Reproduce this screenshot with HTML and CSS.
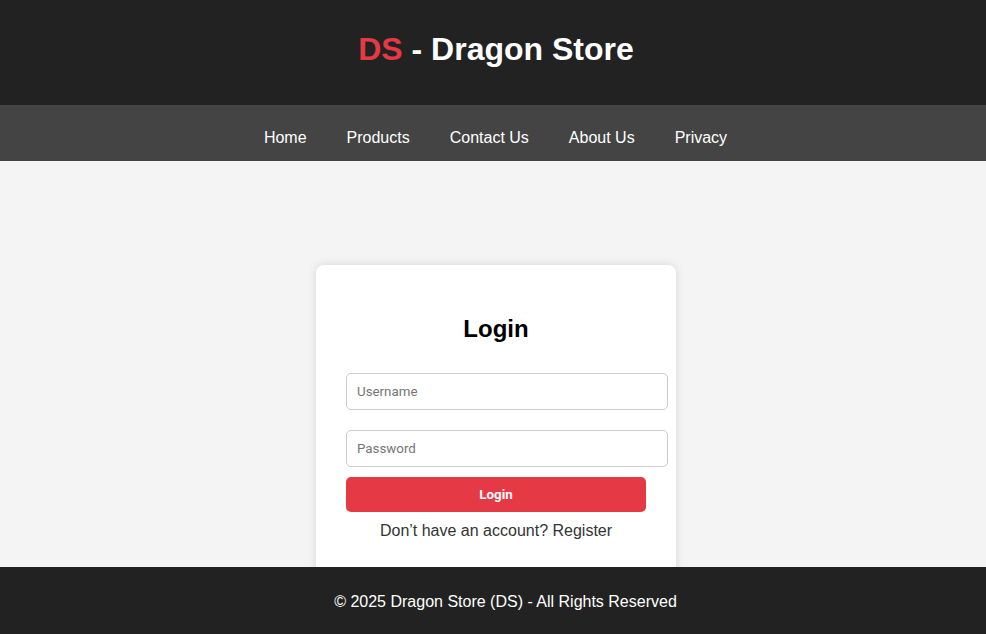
FILE: index.html
```html
<!DOCTYPE html>
<html lang="en">
<head>
<meta charset="UTF-8">
<title>DS - Dragon Store</title>
<link rel="stylesheet" href="styles.css">
</head>
<body>
<header class="site-header">
  <h1 class="brand"><span class="brand-ds">DS</span> - Dragon Store</h1>
</header>
<nav class="site-nav">
  <a href="#">Home</a>
  <a href="#">Products</a>
  <a href="#">Contact Us</a>
  <a href="#">About Us</a>
  <a href="#">Privacy</a>
</nav>
<main class="main">
  <div class="card">
    <h2 class="card-title">Login</h2>
    <form class="login-form">
      <input class="field" type="text" placeholder="Username">
      <input class="field" type="password" placeholder="Password">
      <button class="btn" type="button">Login</button>
    </form>
    <p class="register">Don’t have an account? Register</p>
  </div>
</main>
<footer class="site-footer">© 2025 Dragon Store (DS) - All Rights Reserved</footer>
</body>
</html>
```
FILE: styles.css
```css
body {
  margin: 0;
  font-family: "Liberation Sans", Arial, sans-serif;
  background: #f4f4f4;
  color: #333;
}
.site-header {
  background: #222;
  color: #fff;
  text-align: center;
  padding: 31px 0 37px 6px;
}
.brand {
  margin: 0;
  font-size: 32px;
  line-height: 37px;
  font-weight: bold;
}
.brand-ds {
  color: #e63946;
}
.site-nav {
  background: #444;
  display: flex;
  justify-content: center;
  gap: 40px;
  padding: 23px 0 14px 5px;
  line-height: 19px;
  font-size: 16px;
}
.site-nav a {
  color: #fff;
  text-decoration: none;
}
.main {
  display: flex;
  justify-content: center;
  padding: 104px 0 0 6px;
}
.card {
  width: 300px;
  padding: 30px;
  background: #fff;
  border-radius: 8px;
  box-shadow: 0 0 10px rgba(0, 0, 0, 0.12);
  text-align: center;
}
.card-title {
  font-size: 24px;
  margin: 20px 0;
  color: #000;
}
.login-form {
  display: flex;
  flex-direction: column;
  align-items: flex-start;
}
.field {
  width: 100%;
  margin: 10px 0;
  padding: 10px;
  border: 1px solid #ccc;
  border-radius: 5px;
  font-family: Roboto, "Liberation Sans", sans-serif;
  font-size: 13.333px;
  line-height: 15px;
  outline: none;
}
.field::placeholder {
  color: #757575;
}
.btn {
  width: 100%;
  margin: 0;
  padding: 10px;
  border: none;
  border-radius: 5px;
  background: #e63946;
  color: #fff;
  font-family: Roboto, "Liberation Sans", sans-serif;
  font-weight: bold;
  font-size: 13.333px;
  line-height: 15px;
}
.register {
  margin: 10px 0;
  font-size: 16px;
  color: #333;
}
.site-footer {
  position: fixed;
  left: 0;
  right: 0;
  bottom: 0;
  background: #222;
  color: #fff;
  text-align: center;
  font-size: 16px;
  line-height: 19px;
  padding: 25px 0 23px 25px;
}
```
